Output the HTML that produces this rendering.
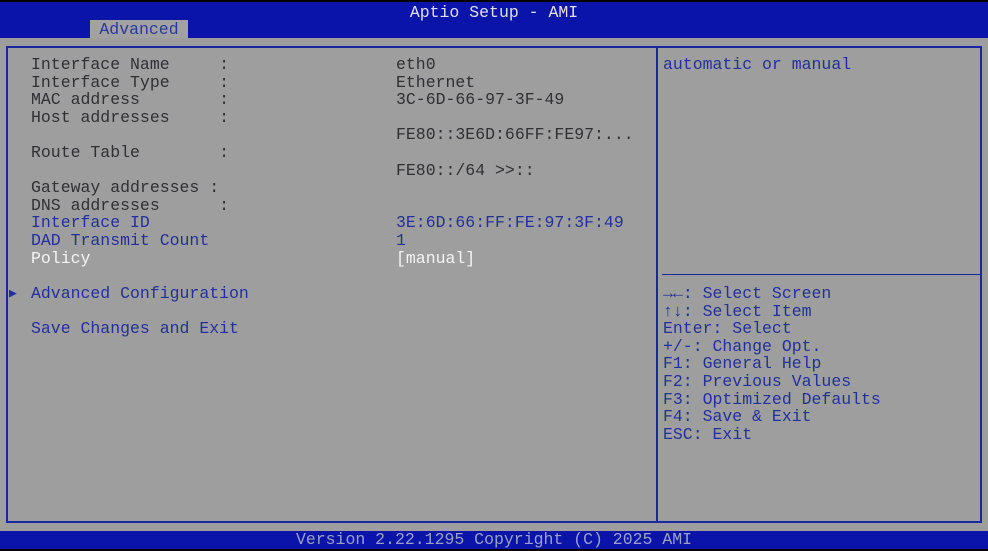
<!DOCTYPE html>
<html><head><meta charset="utf-8"><style>
*{margin:0;padding:0;box-sizing:border-box}
body{width:988px;height:551px;background:#000;position:relative;overflow:hidden;font-family:"Liberation Mono","DejaVu Sans Mono",monospace;font-size:16.5px}
.hdr{position:absolute;left:0;top:2px;width:988px;height:36px;background:#0a14a8}
.title{position:absolute;left:0;width:988px;top:2px;text-align:center;color:#e0e0e8;line-height:18px}
.tab{position:absolute;left:90px;top:18px;width:98px;height:18px;background:#a2a2a2;color:#2a3a9a;text-align:center;line-height:20px}
.body{position:absolute;left:0;top:38px;width:988px;height:493px;background:#9e9e9e}
.panel{position:absolute;left:6px;top:46px;width:976px;height:477px;border:2px solid #1a28a0}
.div{position:absolute;left:656px;top:46px;width:2px;height:477px;background:#1a28a0}
.hl{position:absolute;left:662px;top:274px;width:318px;height:1px;background:#1a28a0}
.col{position:absolute;line-height:17.6px;white-space:pre}
.k{color:#303034}.b{color:#22309c}.w{color:#f4f4f4}
.ftr{position:absolute;left:0;top:531px;width:988px;height:18px;background:#0a14a8;color:#9aa0c8;text-align:center;line-height:18px}
</style></head><body>
<div class="hdr"><div class="title">Aptio Setup - AMI</div><div class="tab">Advanced</div></div>
<div class="body"></div>
<div class="panel"></div>
<div class="div"></div>
<div class="hl"></div>
<div class="col" style="left:31px;top:56px"><span class="k">Interface Name     :
Interface Type     :
MAC address        :
Host addresses     :

Route Table        :

Gateway addresses :
DNS addresses      :</span>
<span class="b">Interface ID
DAD Transmit Count</span>
<span class="w">Policy</span>

<span class="b">Advanced Configuration

Save Changes and Exit</span></div>
<div class="col b" style="left:9px;top:285px;font-size:13px">&#9654;</div>
<div class="col" style="left:396px;top:56px"><span class="k">eth0
Ethernet
3C-6D-66-97-3F-49

FE80::3E6D:66FF:FE97:...

FE80::/64 >>::</span>


<span class="b">3E:6D:66:FF:FE:97:3F:49
1</span>
<span class="w">[manual]</span></div>
<div class="col b" style="left:663px;top:56px">automatic or manual</div>
<div class="col b" style="left:663px;top:285px"><b>&#8594;&#8592;</b>: Select Screen
<b>&#8593;&#8595;</b>: Select Item
Enter: Select
+/-: Change Opt.
F1: General Help
F2: Previous Values
F3: Optimized Defaults
F4: Save &amp; Exit
ESC: Exit</div>
<div class="ftr">Version 2.22.1295 Copyright (C) 2025 AMI</div>
</body></html>
